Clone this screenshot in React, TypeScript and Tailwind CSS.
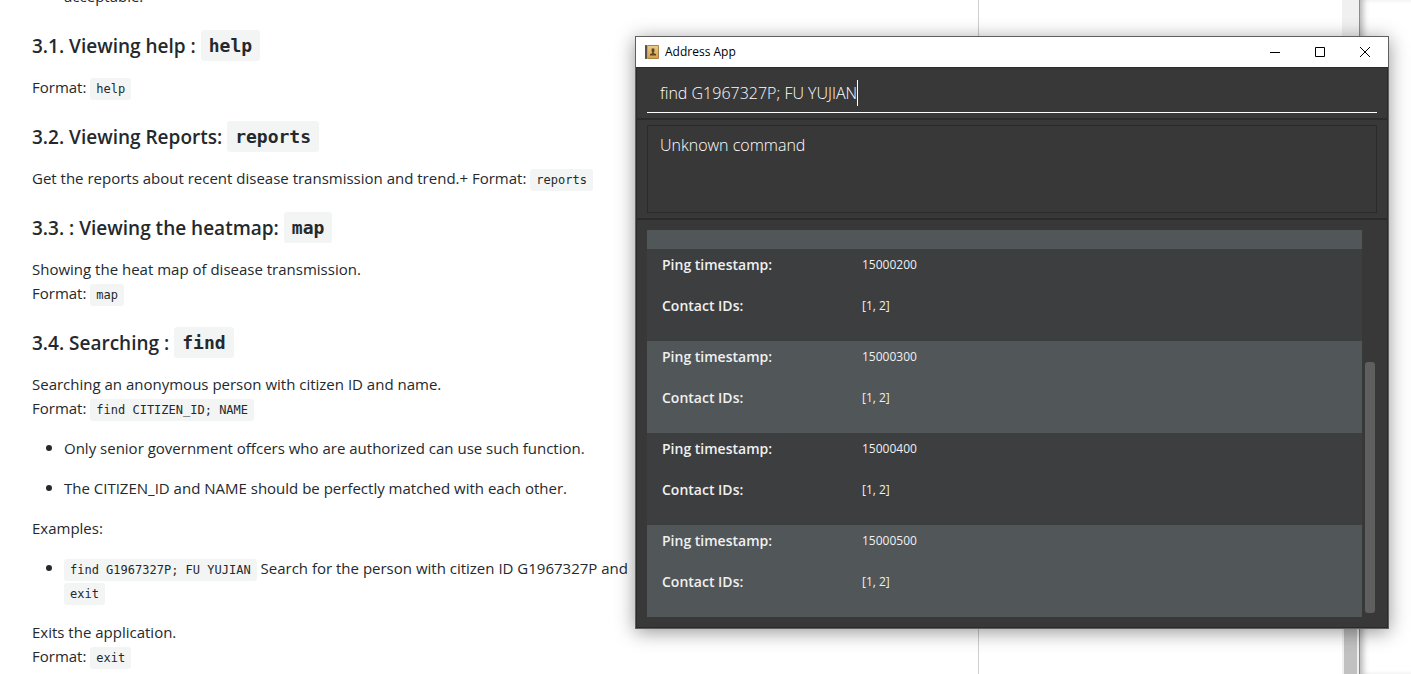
import type { ReactNode } from "react";

const pings = [
  { timestamp: "15000200", contacts: "[1, 2]" },
  { timestamp: "15000300", contacts: "[1, 2]" },
  { timestamp: "15000400", contacts: "[1, 2]" },
  { timestamp: "15000500", contacts: "[1, 2]" },
];

function Code({ children }: { children: ReactNode }) {
  return (
    <code className="rounded-[3px] bg-[#f3f4f4] px-1.5 py-1 font-['DejaVu_Sans_Mono',monospace] text-[12px] leading-none text-[#24292e]">
      {children}
    </code>
  );
}

function Heading({ title, command }: { title: string; command: string }) {
  return (
    <h3 className="mt-[22px] mb-3.5 flex h-[31px] items-center gap-[5px] text-[19px] leading-[30px] font-semibold">
      {title}
      <code className="flex h-[31px] items-center rounded-[3px] bg-[#f3f4f4] px-2 font-['DejaVu_Sans_Mono',monospace] text-[18px] font-bold">
        {command}
      </code>
    </h3>
  );
}

function Bullet({ children }: { children: ReactNode }) {
  return (
    <li className="relative before:absolute before:top-[9px] before:-left-[18px] before:size-1.5 before:rounded-full before:bg-[#24292e]">
      {children}
    </li>
  );
}

function Guide() {
  return (
    <main className="w-[979px] shrink-0 border-r border-[#cfcfcf] px-8 text-[15px] leading-6 text-[#24292e]">
      <p className="-mt-4 pl-8">acceptable.</p>
      <Heading title="3.1. Viewing help :" command="help" />
      <p>
        Format: <Code>help</Code>
      </p>
      <Heading title="3.2. Viewing Reports:" command="reports" />
      <p>
        Get the reports about recent disease transmission and trend.+ Format: <Code>reports</Code>
      </p>
      <Heading title="3.3. : Viewing the heatmap:" command="map" />
      <p>
        Showing the heat map of disease transmission.
        <br />
        Format: <Code>map</Code>
      </p>
      <Heading title="3.4. Searching :" command="find" />
      <p>
        Searching an anonymous person with citizen ID and name.
        <br />
        Format: <Code>find CITIZEN_ID; NAME</Code>
      </p>
      <ul className="my-4 space-y-4 pl-8">
        <Bullet>Only senior government offcers who are authorized can use such function.</Bullet>
        <Bullet>The CITIZEN_ID and NAME should be perfectly matched with each other.</Bullet>
      </ul>
      <p>Examples:</p>
      <ul className="my-4 pl-8">
        <Bullet>
          <Code>find G1967327P; FU YUJIAN</Code> Search for the person with citizen ID G1967327P and
          <br />
          <Code>exit</Code>
        </Bullet>
      </ul>
      <p>
        Exits the application.
        <br />
        Format: <Code>exit</Code>
      </p>
    </main>
  );
}

function BookIcon() {
  return (
    <svg width="14" height="14" viewBox="0 0 14 14" aria-hidden="true">
      <defs>
        <linearGradient id="cover" x1="0" y1="0" x2="0" y2="1">
          <stop offset="0" stopColor="#ecca8a" />
          <stop offset="1" stopColor="#d5a24a" />
        </linearGradient>
      </defs>
      <rect width="14" height="14" rx="1" fill="#a98248" />
      <rect width="3" height="14" rx="1" fill="#5d5048" />
      <rect x="2" width="1" height="14" fill="#b9a58a" />
      <rect x="3" y="1" width="10" height="12" fill="url(#cover)" />
      <path d="M6.6 3.6h2.8v3L8.8 7.2v1L11 9v1.4H5V9l2.2-.8v-1l-.6-.6z" fill="#5b4524" />
    </svg>
  );
}

function AddressWindow() {
  return (
    <section
      aria-label="Address App"
      className="absolute top-9 right-[22px] left-[635px] border border-[#5f5f5f] bg-white shadow-[0_3px_18px_rgba(0,0,0,0.42)]"
    >
      <header className="flex h-[30px] items-center pl-[9px]">
        <BookIcon />
        <h1 className="ml-1.5 flex-1 text-[12px] leading-5 text-black">Address App</h1>
        <button type="button" aria-label="Minimize" className="flex h-7 w-[46px] items-center justify-center">
          <svg width="10" height="10" stroke="#000" aria-hidden="true">
            <path d="M0 5.5h10" />
          </svg>
        </button>
        <button type="button" aria-label="Maximize" className="flex h-7 w-11 items-center justify-center">
          <svg width="10" height="10" fill="none" stroke="#000" aria-hidden="true">
            <path d="M.5.5h9v9h-9z" />
          </svg>
        </button>
        <button type="button" aria-label="Close" className="flex h-7 w-[46px] items-center justify-center">
          <svg width="10" height="10" stroke="#000" aria-hidden="true">
            <path d="M0 0l10 10M10 0L0 10" />
          </svg>
        </button>
      </header>

      <div className="border border-[#2b2b2b] bg-[#383838] text-white">
        <div className="border-b-2 border-[#2b2b2b] px-2.5 pb-[5px]">
          <div className="flex h-[45px] items-center border-b border-white pt-1.5 pl-[13px]">
            <input
              aria-label="Command"
              defaultValue="find G1967327P; FU YUJIAN"
              className="[field-sizing:content] bg-transparent text-[16px] font-light outline-none"
            />
            <span className="h-[26px] w-px bg-white" />
          </div>
        </div>

        <div className="border-b-2 border-[#2b2b2b] px-2.5 py-[5px]">
          <output className="block h-[88px] border border-[#2b2b2b] px-3 pt-[7px] text-[16px] leading-6 font-light">
            Unknown command
          </output>
        </div>

        <div className="flex pt-2.5 pr-3 pb-2.5 pl-2.5">
          <div className="flex-1">
            <div className="h-[19px] bg-[#515658]" />
            {pings.map((ping) => (
              <dl
                key={ping.timestamp}
                className="grid h-[92px] grid-cols-[200px_1fr] content-start items-center gap-y-[17px] bg-[#3c3e3f] pt-1 pl-[15px] text-[#f0f0f0] odd:bg-[#515658]"
              >
                <dt className="text-[14px] leading-6 font-semibold">Ping timestamp:</dt>
                <dd className="text-[12px] leading-6">{ping.timestamp}</dd>
                <dt className="text-[14px] leading-6 font-semibold">Contact IDs:</dt>
                <dd className="text-[12px] leading-6">{ping.contacts}</dd>
              </dl>
            ))}
          </div>
          <div className="ml-[3px] flex w-2.5 flex-col justify-end pb-1">
            <div className="h-[251px] rounded-[3px] bg-[#5f5f5f]" />
          </div>
        </div>
      </div>
    </section>
  );
}

export default function App() {
  return (
    <div className="relative flex h-screen overflow-hidden bg-white font-['Open_Sans','Noto_Sans',sans-serif]">
      <Guide />
      <div className="flex-1" />
      <div className="flex w-[17px] flex-col justify-end bg-[#f0f0f0] pr-0.5 pl-0.5">
        <div className="h-1/2 bg-[#c1c1c1]" />
      </div>
      <div className="w-[52px] border-l border-[#8c8c8c] bg-white shadow-[inset_6px_0_6px_-3px_rgba(0,0,0,0.3)]" />
      <AddressWindow />
    </div>
  );
}
